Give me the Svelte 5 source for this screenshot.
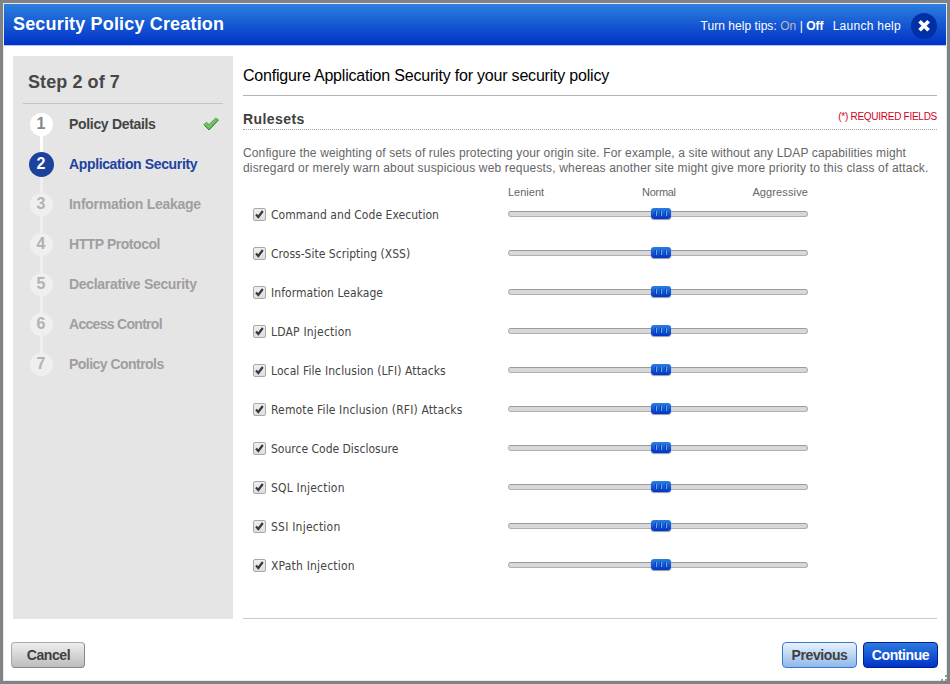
<script>
  const steps = [
    { name: 'Policy Details', spacing: -0.32 },
    { name: 'Application Security', spacing: -0.36 },
    { name: 'Information Leakage', spacing: -0.27 },
    { name: 'HTTP Protocol', spacing: -0.46 },
    { name: 'Declarative Security', spacing: -0.31 },
    { name: 'Access Control', spacing: -0.7 },
    { name: 'Policy Controls', spacing: -0.53 }
  ];
  const current = 2;
  let rules = $state(
    [
      { name: 'Command and Code Execution', spacing: 0.05 },
      { name: 'Cross-Site Scripting (XSS)', spacing: 0.02 },
      { name: 'Information Leakage', spacing: 0.05 },
      { name: 'LDAP Injection', spacing: 0.2 },
      { name: 'Local File Inclusion (LFI) Attacks', spacing: 0.1 },
      { name: 'Remote File Inclusion (RFI) Attacks', spacing: 0.14 },
      { name: 'Source Code Disclosure', spacing: 0 },
      { name: 'SQL Injection', spacing: 0.2 },
      { name: 'SSI Injection', spacing: 0.22 },
      { name: 'XPath Injection', spacing: 0.2 }
    ].map((rule) => ({ ...rule, on: true }))
  );
</script>

<div class="window">
  <header>
    <h1>Security Policy Creation</h1>
    <div class="help">
      <span class="tips">Turn help tips: <span class="dim">On</span> | <b>Off</b></span>
      <span class="launch">Launch help</span>
      <svg class="close" width="26" height="26" viewBox="0 0 26 26">
        <circle cx="13" cy="13" r="13" fill="#0130a6" />
        <path d="M8.6 8.2l9 9M17.6 8.2l-9 9" stroke="#fff" stroke-width="3.7" />
      </svg>
    </div>
  </header>

  <div class="body">
    <aside>
      <h2>Step {current} of {steps.length}</h2>
      <ol>
        {#each steps as step, i}
          <li class:done={i + 1 < current} class:active={i + 1 === current}>
            <span class="num"><span>{i + 1}</span></span>
            <span class="name" style="letter-spacing: {step.spacing}px">{step.name}</span>
            {#if i + 1 < current}
              <svg class="tick" width="16" height="14" viewBox="0 0 16 14">
                <path d="M1 7.6L3.4 5.2L6 7.6L12.8 1L15.4 2.8L6 13Z" fill="#6cc463" stroke="#4e9a49" stroke-width="0.9" stroke-linejoin="round" />
                <path d="M1.4 8.2L6 13L15.2 3.2" fill="none" stroke="#2f7a30" stroke-width="0.8" />
              </svg>
            {/if}
          </li>
        {/each}
      </ol>
    </aside>

    <main>
      <h2 class="title">Configure Application Security for your security policy</h2>
      <div class="section">
        <h3>Rulesets</h3>
        <span class="required">(*) REQUIRED FIELDS</span>
      </div>
      <p>
        <span class="l1">Configure the weighting of sets of rules protecting your origin site. For example, a site without any LDAP capabilities might</span><br />
        <span class="l2">disregard or merely warn about suspicious web requests, whereas another site might give more priority to this class of attack.</span>
      </p>
      <div class="scale"><span>Lenient</span><span class="normal">Normal</span><span class="aggressive">Aggressive</span></div>
      <div class="rules">
        {#each rules as rule}
          <div class="rule">
            <button class="check" aria-label={rule.name} onclick={() => (rule.on = !rule.on)}>
              {#if rule.on}
                <svg width="11" height="11" viewBox="0 0 11 11">
                  <path d="M2 5.6L4.3 8L8.8 2" fill="none" stroke="#383838" stroke-width="2.2" />
                </svg>
              {/if}
            </button>
            <span class="label" style="letter-spacing: {rule.spacing}px">{rule.name}</span>
            <div class="track"><div class="thumb"><i></i><i></i><i></i></div></div>
          </div>
        {/each}
      </div>
    </main>
  </div>

  <footer>
    <button class="btn cancel">Cancel</button>
    <button class="btn previous">Previous</button>
    <button class="btn continue">Continue</button>
  </footer>
  <svg class="grip" width="6" height="6" viewBox="0 0 6 6" fill="#999">
    <path d="M4 0h2v2h-2zM0 4h2v2h-2zM4 4h2v2h-2z" />
  </svg>
</div>

<style>
  .window {
    box-sizing: border-box;
    width: 950px;
    height: 684px;
    border: 3px solid #808285;
    background: #fff;
    box-shadow: inset 0 0 0 1px #e6e8ea;
    padding: 1px;
    display: flex;
    flex-direction: column;
    position: relative;
    overflow: hidden;
    font-family: 'Liberation Sans', Arial, sans-serif;
    white-space: nowrap;
  }
  h1, h2, h3, p, ol { margin: 0; padding: 0; }
  header {
    box-sizing: border-box;
    height: 42px;
    flex: none;
    display: flex;
    justify-content: space-between;
    align-items: center;
    padding: 0 9px;
    background: linear-gradient(#2c7fde, #0032c8);
    border-bottom: 1px solid #b5c6ee;
    color: #fff;
  }
  h1 { font-size: 18px; line-height: 20px; letter-spacing: 0.17px; padding-bottom: 1px; }
  .help { display: flex; align-items: center; font-size: 12px; padding-top: 3px; }
  .tips { letter-spacing: 0.04px; }
  .dim { color: #b9b9c9; }
  .launch { margin-left: 9px; letter-spacing: 0.27px; }
  .close { margin-left: 10px; }
  .body { display: flex; height: 563px; padding: 10px 9px 0; gap: 10px; flex: none; }
  aside { width: 200px; padding: 0 10px; background: #e5e5e5; }
  aside h2 {
    height: 47px;
    line-height: 52px;
    padding-left: 5px;
    border-bottom: 1px solid #c4c4c4;
    font-size: 18px;
    letter-spacing: 0.08px;
    color: #474747;
  }
  ol { list-style: none; }
  li { display: flex; align-items: center; height: 40px; font-size: 14px; font-weight: bold; color: #a19da1; }
  .num {
    align-self: stretch;
    width: 36px;
    display: flex;
    justify-content: center;
    align-items: center;
    background: linear-gradient(#efefef, #efefef) center / 3px 100% no-repeat;
  }
  .num span {
    width: 23px;
    height: 23px;
    line-height: 22px;
    border-radius: 50%;
    text-align: center;
    background: #efefef;
    color: #b2b2b2;
    font-size: 16px;
  }
  li:first-child .num { background: linear-gradient(#fff, #fff) center bottom / 3px 50% no-repeat; }
  li:last-child .num { background: linear-gradient(#efefef, #efefef) center top / 3px 50% no-repeat; }
  .active .num { background: linear-gradient(#fff 50%, #efefef 50%) center / 3px 100% no-repeat; }
  .done { color: #444; }
  .done .num span { background: #fff; color: #888; }
  .active { color: #20439f; }
  .active .num span { background: #1c429e; color: #fff; width: 25px; height: 25px; line-height: 24px; }
  .name { margin-left: 10px; flex: 1; }
  .tick { margin-right: 4px; }
  main { width: 694px; border-bottom: 1px solid #c8c8c8; height: 562px; }
  .title { height: 39px; line-height: 39px; border-bottom: 1px solid #b3b3b3; font-size: 16px; letter-spacing: -0.2px; font-weight: normal; color: #000; }
  .section { display: flex; justify-content: space-between; height: 33px; border-bottom: 1px dotted #a5a5a5; }
  h3 { font-size: 14px; line-height: 46px; letter-spacing: 0.42px; color: #404040; }
  .required { font-size: 10px; line-height: 42px; letter-spacing: -0.27px; color: #d4001a; }
  p { margin-top: 16px; font-size: 12px; line-height: 15px; color: #666; }
  .l1 { letter-spacing: 0.125px; }
  .l2 { letter-spacing: 0.168px; }
  .scale { display: flex; width: 300px; margin: 6px 0 0 265px; height: 13px; line-height: 20px; font-size: 11px; color: #666; }
  .normal { margin-left: 98px; letter-spacing: -0.3px; }
  .aggressive { margin-left: auto; letter-spacing: 0.12px; }
  .rule { display: flex; align-items: center; height: 39px; padding-left: 10px; }
  .check {
    box-sizing: border-box;
    width: 13px;
    height: 13px;
    margin: 0 5px 1px 0;
    padding: 0;
    border: 1px solid #a8a8a8;
    border-radius: 2px;
    background: linear-gradient(#efefef, #dedede);
  }
  .check svg { display: block; }
  .label { width: 237px; font: 12px 'DejaVu Sans Condensed', 'DejaVu Sans', sans-serif; font-stretch: condensed; color: #444; }
  .track {
    box-sizing: border-box;
    width: 300px;
    height: 6px;
    margin-bottom: 2px;
    border: 1px solid #b0b0ac;
    border-top-color: #989c9c;
    border-radius: 3px;
    background: #d8d8d8;
    display: flex;
    align-items: center;
  }
  .thumb {
    width: 20px;
    height: 11px;
    margin-left: 142px;
    border-radius: 3px;
    background: linear-gradient(#2b80e0, #0033c9);
    box-shadow: 0 1px 1px #0006;
    display: flex;
    justify-content: center;
    align-items: center;
    gap: 4px;
  }
  .thumb i { width: 1px; height: 5px; background: #6ba4ea; box-shadow: -1px 0 #0a3fae; }
  footer { display: flex; padding: 23px 8px 0 7px; flex: none; }
  .btn {
    box-sizing: border-box;
    height: 26px;
    width: 75px;
    padding: 0;
    border-radius: 4px;
    font: bold 14px 'Liberation Sans', Arial, sans-serif;
    letter-spacing: -0.4px;
    color: #404040;
  }
  .cancel { width: 74px; padding-left: 1px; border: 1px solid #aaa; border-right-color: #888; border-bottom-color: #888; background: linear-gradient(#eee, #bdbdbd); }
  .previous { margin-left: auto; border: 1px solid #377bd0; background: linear-gradient(#e9f2ff, #8fb8ea); }
  .continue { margin-left: 6px; border: 1px solid #001d91; background: linear-gradient(#2b7bde, #0032c8); color: #fff; }
  .grip { position: absolute; right: 0; bottom: 0; }
</style>
